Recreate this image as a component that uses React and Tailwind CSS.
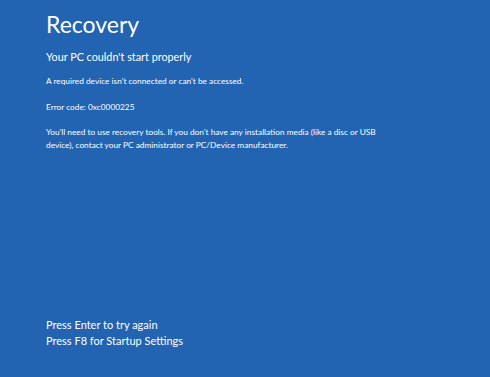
export default function App() {
  return (
    <div
      className="h-[377px] w-[490px] bg-[#2264b2] text-white flex flex-col justify-between pl-[46px] pt-[8px] pb-[28px]"
      style={{ fontFamily: 'Lato, "Open Sans", sans-serif' }}
    >
      {/* Messaggio principale */}
      <div>
        <h1 className="text-[23px] leading-[32px] font-normal">Recovery</h1>
        <p className="text-[10.8px] leading-[18px] mt-[8px]">Your PC couldn't start properly</p>
        <p className="text-[8.3px] leading-[12px] mt-[9px]">A required device isn't connected or can't be accessed.</p>
        <p className="text-[8.3px] leading-[12px] mt-[14px]">Error code: 0xc0000225</p>
        <p className="text-[8.3px] leading-[13px] mt-[13px] max-w-[340px]">
          You'll need to use recovery tools. If you don't have any installation media (like a disc or USB
          device), contact your PC administrator or PC/Device manufacturer.
        </p>
      </div>

      {/* Opzioni */}
      <div className="text-[11px] leading-[16px]">
        <p>Press Enter to try again</p>
        <p>Press F8 for Startup Settings</p>
      </div>
    </div>
  )
}
